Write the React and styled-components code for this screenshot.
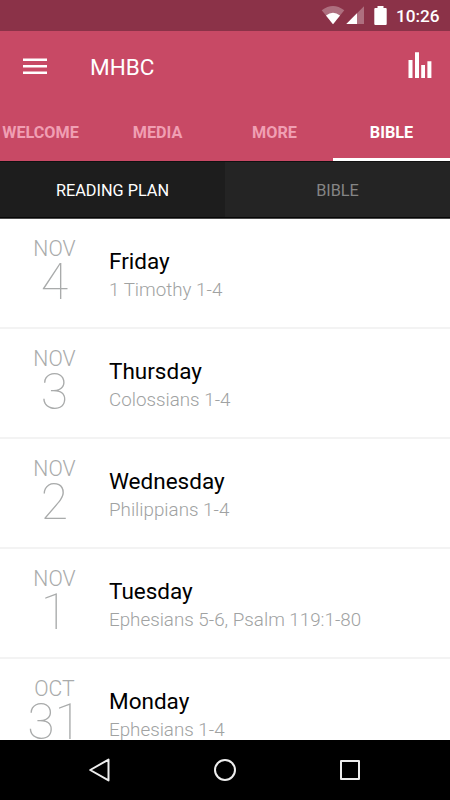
import { styled, createGlobalStyle } from "styled-components";

const GlobalStyle = createGlobalStyle`
    * {
        box-sizing: border-box;
    }

    body {
        margin: 0;
        font-family: Roboto, "Liberation Sans", sans-serif;
        overflow: hidden;
    }
`;

const Screen = styled.div`
    width: 450px;
    height: 800px;

    display: flex;
    flex-direction: column;

    background-color: #FFF;
    overflow: hidden;
`;

const StatusBar = styled.div`
    height: 31px;
    flex-shrink: 0;

    display: flex;
    justify-content: flex-end;
    align-items: center;

    padding-right: 10px;
    color: #FFF;
    background-color: #8B3248;
`;

const Clock = styled.span`
    width: 44px;
    margin-left: 9px;
    padding-top: 2px;
    font-size: 17.2px;
    line-height: 29px;
    font-weight: 500;
    white-space: nowrap;
`;

const Header = styled.header`
    height: 130px;
    flex-shrink: 0;

    display: flex;
    flex-direction: column;

    background-color: #C84965;
`;

const Toolbar = styled.div`
    height: 71px;

    display: flex;
    align-items: center;

    padding: 0 18px 0 23px;
`;

const Title = styled.h1`
    flex: 1;
    margin: 0 0 0 43px;
    padding-top: 1px;
    color: #FFF;
    font-size: 22.5px;
    line-height: 26px;
    font-weight: 400;
`;

const Tabs = styled.nav`
    height: 59px;

    display: flex;
    justify-content: flex-end;
`;

const Tab = styled.div`
    width: 117px;
    height: 59px;
    flex-shrink: 0;

    display: flex;
    justify-content: center;
    align-items: center;

    padding-top: 4px;
    color: ${({ $active }) => ($active ? "#FFF" : "#F09FB3")};
    border-bottom: 3px solid ${({ $active }) => ($active ? "#FFF" : "transparent")};
    font-size: 16.2px;
    font-weight: 700;
`;

const SubTabs = styled.div`
    height: 58px;
    flex-shrink: 0;

    display: flex;

    border-top: 1px solid #111;
    border-bottom: 1px solid #4A4A4A;
`;

const SubTab = styled.div`
    flex: 1;

    display: flex;
    justify-content: center;
    align-items: center;

    padding-top: 2px;
    color: ${({ $active }) => ($active ? "#FFF" : "#858585")};
    background-color: ${({ $active }) => ($active ? "#1D1D1D" : "#242424")};
    border-bottom: 1px solid #060606;
    font-size: 16.3px;
`;

const List = styled.main`
    height: 521px;
    flex-shrink: 0;
    overflow: hidden;
`;

const Row = styled.div`
    height: 110px;

    display: flex;

    border-bottom: 2px solid #F3F3F3;
`;

const DateBox = styled.div`
    width: 109px;

    display: flex;
    flex-direction: column;
    align-items: center;

    padding-top: 17px;
    color: #A9ABAB;
`;

const Month = styled.span`
    font-size: 21.2px;
    line-height: 26px;
    font-weight: 300;
`;

const DayNumber = styled.span`
    height: 40px;
    font-size: 50px;
    line-height: 40px;
    font-weight: 100;
`;

const Reading = styled.div`
    padding-top: 28px;
    white-space: nowrap;
`;

const Weekday = styled.h2`
    margin: 0;
    color: #000;
    font-size: 22.5px;
    line-height: 28px;
    font-weight: 400;
`;

const Passage = styled.p`
    margin: 0;
    color: #A0A2A2;
    font-size: 18.8px;
    line-height: 30px;
    font-weight: 300;
`;

const NavBar = styled.footer`
    height: 60px;
    flex-shrink: 0;

    display: flex;
    justify-content: center;
    align-items: center;
    gap: 101px;

    background-color: #000;
`;

const Icon = styled.svg`
    display: block;
    flex-shrink: 0;
`;

const tabs = ["WELCOME", "MEDIA", "MORE", "BIBLE"];

const readings = [
    { month: "NOV", day: 4, weekday: "Friday", passage: "1 Timothy 1-4" },
    { month: "NOV", day: 3, weekday: "Thursday", passage: "Colossians 1-4" },
    { month: "NOV", day: 2, weekday: "Wednesday", passage: "Philippians 1-4" },
    { month: "NOV", day: 1, weekday: "Tuesday", passage: "Ephesians 5-6, Psalm 119:1-80" },
    { month: "OCT", day: 31, weekday: "Monday", passage: "Ephesians 1-4" },
];

const StatusIcons = () => (
    <Icon width="66" height="31" viewBox="321 0 66 31" fill="#FFF">
        <path d="M321.7 10.3Q333 1.8 344.3 10.3L333 24.3Z" opacity="0.3" />
        <path d="M326 15.4Q333 10.2 340 15.4L333 24.3Z" />
        <path d="M346.3 24L364 6.3V24Z" opacity="0.3" />
        <path d="M346.3 24L357 13.3V24Z" />
        <path d="M377.5 6h6v2h2.2a1 1 0 0 1 1 1v15a1 1 0 0 1-1 1h-10.4a1 1 0 0 1-1-1v-15a1 1 0 0 1 1-1h2.2z" />
    </Icon>
);

const MenuIcon = () => (
    <Icon width="24" height="17" fill="#FFF">
        <path d="M0 0.6h24v2.4H0zM0 7.1h24v2.4H0zM0 13.6h24v2.4H0z" />
    </Icon>
);

const ChartIcon = () => (
    <Icon width="24" height="29" fill="#FFF">
        <path d="M0.5 8h4v18h-4zM7 0.3h4V26H7zM13.2 13h3.8v13h-3.8zM19.4 9.3h4V26h-4z" />
    </Icon>
);

const NavIcon = ({ children }) => (
    <Icon width="24" height="24" fill="none" stroke="#EEE" strokeWidth="2" strokeLinejoin="round">
        {children}
    </Icon>
);

const App = () => {
    return (
        <Screen>
            <GlobalStyle />
            <StatusBar>
                <StatusIcons />
                <Clock>10:26</Clock>
            </StatusBar>
            <Header>
                <Toolbar>
                    <MenuIcon />
                    <Title>MHBC</Title>
                    <ChartIcon />
                </Toolbar>
                <Tabs>
                    {tabs.map((tab) => (
                        <Tab key={tab} $active={tab === "BIBLE"}>{tab}</Tab>
                    ))}
                </Tabs>
            </Header>
            <SubTabs>
                <SubTab $active>READING PLAN</SubTab>
                <SubTab>BIBLE</SubTab>
            </SubTabs>
            <List>
                {readings.map(({ month, day, weekday, passage }) => (
                    <Row key={weekday}>
                        <DateBox>
                            <Month>{month}</Month>
                            <DayNumber>{day}</DayNumber>
                        </DateBox>
                        <Reading>
                            <Weekday>{weekday}</Weekday>
                            <Passage>{passage}</Passage>
                        </Reading>
                    </Row>
                ))}
            </List>
            <NavBar>
                <NavIcon><path d="M2.2 12L20.5 1.6V22.4Z" /></NavIcon>
                <NavIcon><circle cx="12" cy="12" r="10" /></NavIcon>
                <NavIcon><path d="M3 3h18v18H3z" /></NavIcon>
            </NavBar>
        </Screen>
    )
}

export default App
